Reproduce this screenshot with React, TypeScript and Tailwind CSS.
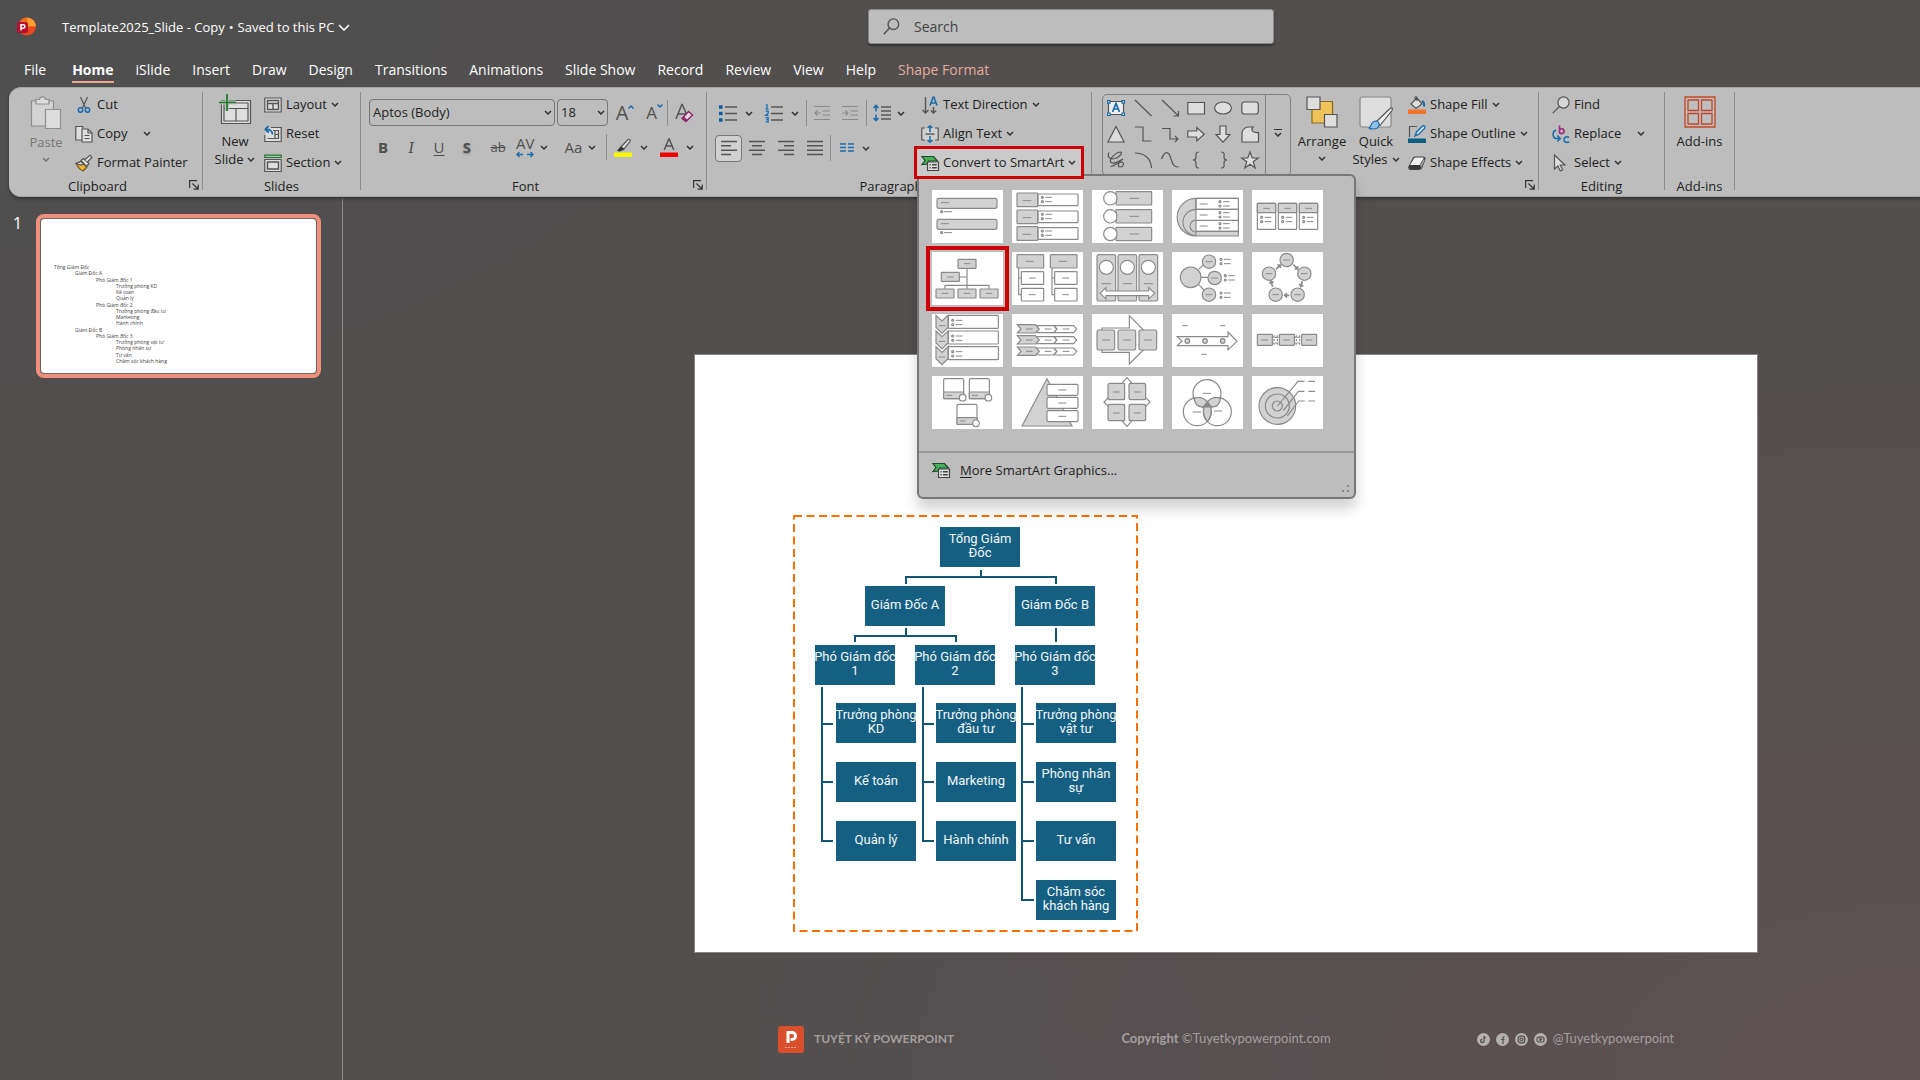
import React from "react";

type Kids = { children?: React.ReactNode };

/* ---------- small building blocks ---------- */

function Chevron({ className = "text-[#333]" }: { className?: string }) {
  return (
    <svg className={`h-[5px] w-[8px] shrink-0 ${className}`} viewBox="0 0 8 5" fill="none" stroke="currentColor" strokeWidth="1.5">
      <path d="M1 1l3 3 3-3" />
    </svg>
  );
}

function Launcher({ name }: { name: string }) {
  return (
    <button type="button" aria-label={name} className="absolute right-[3px] bottom-0">
      <svg className="h-[10px] w-[10px]" viewBox="0 0 10 10" fill="none" stroke="#333" strokeWidth="1.2">
        <path d="M.6 8V.6H8M3.5 3.5l5 5M9.2 4.5v4.7H4.5" />
      </svg>
    </button>
  );
}

function Group({ label, width, launcher, children }: Kids & { label: string; width: string; launcher?: boolean }) {
  return (
    <section aria-label={label} className={`relative flex h-[98px] shrink-0 flex-col border-r border-[#8c8c8c] ${width}`}>
      <div className="flex h-[86px] shrink-0 items-start">{children}</div>
      <div className={launcher ? "pr-4 text-center leading-4" : "text-center leading-4"}>{label}</div>
      {launcher && <Launcher name={`${label} settings`} />}
    </section>
  );
}

function Item({ icon, text, chevron }: { icon: React.ReactNode; text: string; chevron?: "near" | "far" }) {
  return (
    <button type="button" className="flex h-[29px] items-center gap-1 whitespace-nowrap">
      <span className="flex w-[18px] justify-center">{icon}</span>
      <span>{text}</span>
      {chevron && <Chevron className={chevron === "far" ? "ml-3 text-[#333]" : "text-[#333]"} />}
    </button>
  );
}

const Items = ({ children, className = "" }: Kids & { className?: string }) => (
  <div className={`-mt-[2px] flex flex-col ${className}`}>{children}</div>
);

function Ico({ children, w = "size-[18px]", box = "0 0 18 18" }: Kids & { w?: string; box?: string }) {
  return (
    <svg className={`shrink-0 overflow-visible ${w}`} viewBox={box} fill="none" stroke="#555" strokeWidth="1.2">
      {children}
    </svg>
  );
}

const Bar = () => <span className="h-[26px] w-px bg-[#8c8c8c]" />;

const BLUE = "#1a6cad";
const PALE = "#dedede";

/* ---------- ribbon icons ---------- */

const CutIcon = () => (
  <Ico>
    <path d="M5.5 1l5 11M12.5 1l-5 11" />
    <circle cx="5.5" cy="14" r="2.2" stroke={BLUE} strokeWidth="1.5" />
    <circle cx="12.5" cy="14" r="2.2" stroke={BLUE} strokeWidth="1.5" />
  </Ico>
);
const CopyIcon = () => (
  <Ico>
    <path d="M6.500 15H.8V1.500h7v2" fill={PALE} />
    <path d="M7 4h6l4 4v9H7z" fill={PALE} />
    <path d="M13 4v4h4M9.500 10.500h5M9.500 13.500h5" />
  </Ico>
);
const PainterIcon = () => (
  <Ico>
    <path d="M1 9.500l5-2 6 5.500-4 4c-3-1-5-4-7-7.500z" fill="#e8b339" stroke="#7a5a10" />
    <path d="M1 9.500l5-2 3 2.500-3.500 1z" fill={PALE} />
    <path d="M6 6.500l2.500-2 5.500 5-2.500 3z" fill={PALE} />
    <path d="M10 5.500L15 1.200l2 2L12.500 8" fill={PALE} />
  </Ico>
);
const PasteIcon = () => (
  <Ico w="h-[34px] w-[32px]" box="0 0 32 34">
    <g stroke="#8e8e8e">
      <path d="M1.500 5h22v25h-22z" fill="#d3d3d3" />
      <path d="M6 3.500h3.500c.5-3.500 5.500-3.500 6 0H19V8H6z" fill="#dcdcdc" />
      <path d="M15.500 13.500h15v19h-15z" fill="#dcdcdc" />
    </g>
  </Ico>
);
const NewSlideIcon = () => (
  <Ico w="h-[31px] w-[34px]" box="0 0 34 31">
    <path d="M3.500 6.500h29v23h-29z" fill={PALE} />
    <path d="M6 9h24v18H6zM6 14.500h24M18 14.500V27" />
    <path d="M9 0v17M1 8.500h17" stroke="#bdbdbd" strokeWidth="4" />
    <path d="M9 0v17M1 8.500h17" stroke="#1d7a2a" strokeWidth="1.700" />
  </Ico>
);
const LayoutIcon = () => (
  <Ico>
    <path d="M.8 2h16.400v14H.8z" fill={PALE} />
    <path d="M3.500 4.500h11v9h-11zM3.500 7.500h11M9 7.500v6" strokeWidth="1.400" />
  </Ico>
);
const ResetIcon = () => (
  <Ico>
    <path d="M7 2.500h10.200v14H.8V10" fill={PALE} />
    <path d="M9 5.500h5.500v8h-11M11 5.500v8M11 9.500h3.500" />
    <path d="M4.500 1L1.300 4.500 5 7.500M1.500 4.500c4-.8 7 1.500 7 5" stroke={BLUE} strokeWidth="1.700" />
  </Ico>
);
const SectionIcon = () => (
  <Ico>
    <path d="M.8 1.200h16.400v2.300H.8z" stroke="#1d7a2a" />
    <path d="M.8 5.500h16.400v12H.8z" fill={PALE} />
    <path d="M3.500 8h11v7h-11z" strokeWidth="1.400" />
  </Ico>
);
const Glyph = ({ children, className = "" }: Kids & { className?: string }) => (
  <span className={`leading-none text-[#505050] ${className}`}>{children}</span>
);
const ClearIcon = () => (
  <Ico w="h-[20px] w-[19px]" box="0 0 19 20">
    <path d="M1 16L6.800 1.500h.4L12 12M3 11h8" strokeWidth="1.500" />
    <path d="M13.500 8.500l4 3.500-6 6-3.500-3.500z" fill={PALE} stroke="#93266d" strokeWidth="1.500" />
    <path d="M8.500 14l3.500 3.500-1.500 1-3.500-3z" fill="#93266d" stroke="#93266d" />
  </Ico>
);
const HighlightIcon = () => (
  <Ico w="h-[19px] w-[18px]" box="0 0 18 19">
    <path d="M7 9l7-7.500c1.500-.8 3 .7 2 2.200L10 11z" fill={PALE} />
    <path d="M3 13l3.500-4.500 4 3L6 13.500z" fill="#333" stroke="none" />
    <path d="M0 14.500h18v4.500H0z" fill="#f7f700" stroke="none" />
  </Ico>
);
const FontColorIcon = () => (
  <Ico w="h-[19px] w-[18px]" box="0 0 18 19">
    <path d="M4.200 12L8.800 1h.4l4.600 11M6 8h6" strokeWidth="1.500" />
    <path d="M0 14.500h18v4.500H0z" fill="#f00000" stroke="none" />
  </Ico>
);
const SpacingIcon = () => (
  <Ico w="h-[7px] w-[18px]" box="0 0 18 7">
    <path d="M7 3.500H1M3.500 1L1 3.500 3.500 6M11 3.500h6M14.500 1L17 3.500 14.500 6" stroke={BLUE} strokeWidth="1.400" />
  </Ico>
);
const Bullets = () => (
  <Ico>
    <path d="M6 3h12M6 9.500h12M6 16h12" strokeWidth="1.400" />
    <path d="M0 1.200h3.600v3.600H0zM0 7.700h3.600v3.600H0zM0 14.200h3.600v3.600H0z" fill="#0f5ea8" stroke="none" />
  </Ico>
);
const Numbers = () => (
  <Ico>
    <path d="M6 3h12M6 9.500h12M6 16h12" strokeWidth="1.400" />
    <g stroke="#0f6fb5">
      <path d="M.8 1.200L2 .6v4M.5 4.800h3M.6 7.200h2.600v2L.6 11.300h2.800M.6 13.600h2.600v4.200H.6M1.200 15.600h2" />
    </g>
  </Ico>
);
const Indent = ({ out }: { out?: boolean }) => (
  <Ico w="size-[16px]" box="0 0 16 16">
    <g stroke="#8a8a8a">
      <path d="M0 1.500h16M8.500 6h7.500M8.500 10h7.500M0 14.500h16" />
      <path d={out ? "M7 8H1M3.500 5.500L1 8l2.500 2.500" : "M0 8h6M3.500 5.500L6 8l-2.500 2.500"} />
    </g>
  </Ico>
);
const LineSpacing = () => (
  <Ico>
    <path d="M8 3h10M8 7h10M8 11h10M8 15h10" strokeWidth="1.400" />
    <path d="M3 1.500v6M3 10.500v6M.5 4L3 1.500 5.500 4M.5 14L3 16.500 5.500 14" stroke={BLUE} strokeWidth="1.600" />
  </Ico>
);
const AlignLines = ({ d }: { d: string }) => (
  <Ico w="size-[16px]" box="0 0 16 16">
    <path d={d} strokeWidth="1.400" />
  </Ico>
);
const ColumnsIcon = () => (
  <Ico w="h-[12px] w-[14px]" box="0 0 14 12">
    <path d="M0 2h6M0 5.500h6M0 9h6M8 2h6M8 5.500h6M8 9h6" stroke={BLUE} strokeWidth="1.400" />
  </Ico>
);
const TextDirIcon = () => (
  <Ico>
    <path d="M4.500 1v15.500M1.500 14l3 3 3-3M12.500 11v6M9.800 14.500l2.700 2.500 2.700-2.500" strokeWidth="1.400" />
    <path d="M9 9.500L12.200 1h.6L16 9.500M10 7h5" stroke={BLUE} strokeWidth="1.600" />
  </Ico>
);
const AlignTextIcon = () => (
  <Ico>
    <path d="M.8 3h16.400v12H.8z" fill="#d0d0d0" stroke="none" />
    <path d="M4 3H.8v12H4M14 3h3.200v12H14" />
    <path d="M4.500 9h9" strokeWidth="1.400" />
    <path d="M9 .8V7M9 17.200V11M6.500 3L9 .8 11.500 3M6.500 15L9 17.200 11.500 15" stroke={BLUE} strokeWidth="1.500" />
  </Ico>
);
const SmartArtIcon = () => (
  <Ico>
    <path d="M1 2.500h11.500l4 4.500H7.500v3L1 10.500l3-4z" fill="#46b05a" stroke="#1b4d25" />
    <path d="M6.500 8h11v8.500h-11z" fill={PALE} stroke="#444" />
    <path d="M8.500 10.800h1.200M11 10.800h4.800M8.500 13.800h1.200M11 13.800h4.800" stroke="#444" strokeWidth="1.400" />
  </Ico>
);
const ArrangeIcon = () => (
  <Ico w="h-[32px] w-[32px]" box="0 0 32 32">
    <path d="M6 5.500h20.500V27H6z" fill="#f0c25a" stroke="#8a6a1c" />
    <path d="M1 1h13v12.500H1zM18.500 18.500h12.500v12.500H18.500z" fill={PALE} />
  </Ico>
);
const QuickIcon = () => (
  <Ico w="h-[34px] w-[34px]" box="0 0 34 34">
    <rect x="1" y="1" width="31" height="30" rx="2" fill={PALE} stroke="#888" />
    <path d="M17 26L31 12.500c2-1.500 3 0 2 2L21 29.500z" fill="#eee" />
    <path d="M10 32c3-1 1-7 7-7 5 1 4 8-3 8-2 0-3 0-4-1z" fill="#8fc3ea" stroke={BLUE} />
  </Ico>
);
const FillIcon = () => (
  <Ico>
    <path d="M3 8l6-6 5 6-6 4.500zM7 4V1.500c0-1 2-1 2 0V5" fill={PALE} />
    <path d="M14 5c2 1 2.500 3 2 5.500" stroke={BLUE} strokeWidth="2" />
    <path d="M0 13.500h18V18H0z" fill="#f2742b" stroke="none" />
  </Ico>
);
const OutlineIcon = () => (
  <Ico>
    <path d="M9 1.500H1.500V12" />
    <path d="M7 11l1.500-4 6-6c1.500-.8 3 .8 2.300 2.200l-6 6z" fill="#cfe3f3" stroke={BLUE} strokeWidth="1.400" />
    <path d="M0 13.500h18V18H0z" fill="#0f5f85" stroke="none" />
  </Ico>
);
const EffectsIcon = () => (
  <Ico>
    <path d="M1 12.500L5.500 4c.4-.7 1-1 2-1H15c1.500 0 2.300 1 1.800 2.500L14 13c-.4 1.200-1.500 2.500-3 2.500H3c-1.700 0-2.700-1.500-2-3z" fill="#3a3a3a" stroke="#444" />
    <path d="M2 11l4-6.500C6.400 3.700 7 3.500 8 3.500h6.500c1 0 1.300.5.800 1.300L11.500 11z" fill="#f0f0f0" stroke="none" />
    <path d="M12 11l4-6.500.5 2L13.500 14z" fill="#9a9a9a" stroke="none" />
  </Ico>
);
const Lens = () => (
  <Ico>
    <circle cx="11.500" cy="6.500" r="5.600" fill="#d6d6d6" />
    <path d="M7.500 10.500L.8 17.200" />
  </Ico>
);
const ReplaceIcon = () => (
  <Ico>
    <path d="M7.500.500v8.200M7.500 5.200c.6-2 4.500-2 4.500 1s-3.900 3-4.500 1" stroke="#a3267f" strokeWidth="1.600" />
    <path d="M17 12.600c-1.500-1.500-5-.9-5 2s3.500 3.500 5 2" stroke={BLUE} strokeWidth="1.600" />
    <path d="M4 5C0 6.500 0 13 4.500 13.500h3.500M5.300 10.500l3 3-3 3" stroke={BLUE} strokeWidth="1.500" />
  </Ico>
);
const SelectIcon = () => (
  <Ico>
    <path d="M2.500 1v14l3.300-3 2.500 5 2.300-1.200L8.200 11h4.600z" fill={PALE} />
  </Ico>
);
const AddinsIcon = () => (
  <Ico w="size-[32px]" box="0 0 32 32">
    <g stroke="#c4482b" strokeWidth="1.300">
      <path d="M1 1h30v30H1zM4 4h10.500v10.500H4zM17.500 4H28v10.500H17.500zM4 17.500h10.500V28H4zM17.500 17.500H28V28H17.500z" />
    </g>
  </Ico>
);

const SHAPES: React.ReactNode[] = [
  <g>
    <path d="M1.500 2.500h15v13h-15z" fill="#eee" />
    <path d="M5.500 13L9 4.500 12.500 13M6.800 10h4.400" stroke={BLUE} strokeWidth="1.700" />
    <g fill="#eee" stroke={BLUE}>
      <path d="M.6 1.600h2.500v2.500H.6zM15 1.600h2.500v2.500H15zM.6 14h2.500v2.500H.6zM15 14h2.500v2.500H15z" />
    </g>
  </g>,
  <path d="M1 1l16.500 16" />,
  <path d="M1 1l16.500 16M17.500 12v5h-5" />,
  <path d="M.8 3.500h16.700v11.500H.8z" fill={PALE} />,
  <ellipse cx="9" cy="9" rx="8.400" ry="6" fill={PALE} />,
  <rect x=".8" y="3" width="16.500" height="12" rx="2.500" fill={PALE} />,
  <path d="M9 1.500L17 17H1z" fill={PALE} />,
  <path d="M1 2h8v14h8.500" />,
  <path d="M1 3.500h8V14h8M14 11l3 3-3 3" />,
  <path d="M.8 6h9V2.500L17.200 9.200 9.800 16v-4h-9z" fill={PALE} />,
  <path d="M6 1h6v8.500h4L9 17.200 2 9.500h4z" fill={PALE} />,
  <path d="M1 7.500C2 4 4 2 8 2h4c-2.500 3-.5 6 5.500 5.500V17H1z" fill={PALE} />,
  <path d="M2 1.500C0 5 2 9 8 7.500c5-1.500 8-6 5.500-6.500C10 1 1 8 4 11.500c3 2.500 9-2 12-3.500M16 8c-4 2-6.500 8-3 8 4 0 5-5 1-5-4 .5-6 4-10.500 4.500" />,
  <path d="M1 2c9 0 16 5 16.500 15" />,
  <path d="M.5 8C4-1 8 0 10 8c2 7 4 8 7.500 8" />,
  <path d="M12 1C8 1 9 4 9 6c0 2-1 3-3 3 2 0 3 1 3 3 0 2-1 5 3 5" />,
  <path d="M7 1c4 0 3 3 3 5 0 2 1 3 3 3-2 0-3 1-3 3 0 2 1 5-3 5" />,
  <path d="M9 1l2.200 6h6l-5 3.700L14.200 17 9 13.200 3.800 17l2-6.300-5-3.700h6z" fill={PALE} />,
];

/* ---------- SmartArt gallery drawings, on a 213 x 159 grid ---------- */

const G = "#d2d2d2";
const B = ({ x, y, w, h, f = G, r = 2 }: { x: number; y: number; w: number; h: number; f?: string; r?: number }) => (
  <rect x={x} y={y} width={w} height={h} rx={r} fill={f} />
);
const C = ({ x, y, r, f = G }: { x: number; y: number; r: number; f?: string }) => <circle cx={x} cy={y} r={r} fill={f} />;
const T = ({ x, y, w = 20 }: { x: number; y: number; w?: number }) => <path d={`M${x - w / 2} ${y}h${w}`} strokeWidth="3" />;
const L = ({ x, y }: { x: number; y: number }) => (
  <g>
    <circle cx={x} cy={y} r="3" />
    <circle cx={x} cy={y + 13} r="3" />
    <path d={`M${x + 9} ${y}h20M${x + 9} ${y + 13}h20`} strokeWidth="3" />
  </g>
);

const GALLERY: [string, React.ReactNode][] = [
  ["Vertical Bullet List", <>
    <B x={15} y={25} w={180} h={30} r={6} /><T x={39} y={38} w={24} /><C x={29} y={65} r={3} /><T x={48} y={65} w={24} />
    <B x={15} y={88} w={180} h={30} r={6} /><T x={39} y={101} w={24} /><C x={29} y={128} r={3} /><T x={48} y={128} w={24} />
  </>],
  ["Vertical Box List", <>{[9, 60, 110].map((y) => <g key={y}><B x={78} y={y + 3} w={120} h={35} f="#fff" /><B x={15} y={y} w={62} h={41} /><T x={45} y={y + 23} w={26} /><L x={91} y={y + 13} /></g>)}</>],
  ["Vertical Circle List", <>{[4, 58, 111].map((y) => <g key={y}><B x={72} y={y + 1} w={107} h={40} /><C x={55} y={y + 21} r={20} f="#fff" /><T x={127} y={y + 21} w={28} /></g>)}</>],
  ["Stacked Target List", <>
    <path d="M72 25h127v113H72a56 56 0 0 1 0-113z" fill={G} /><path d="M72 58h127v66H72" fill="#fff" /><path d="M72 25h127v33H72z" fill="#fff" />
    <path d="M72 58a38 38 0 0 0 0 78M72 90a18 18 0 0 0 0 36M72 25v113M72 58h127M72 91h127M72 124h127" />
    {[35, 68, 101].map((y) => <g key={y}><T x={95} y={y + 7} w={24} /><L x={144} y={y} /></g>)}
  </>],
  ["Grouped List", <>{[16, 79, 142].map((x) => <g key={x}><B x={x} y={40} w={55} h={78} f="#fff" /><B x={x} y={40} w={55} h={28} /><T x={x + 28} y={55} /><L x={x + 13} y={82} /></g>)}</>],
  ["Organization Chart", <>
    <path d="M105 50v60M82 75h23M39 110v-10h132v10" />
    <B x={78} y={22} w={54} h={27} /><B x={28} y={61} w={54} h={27} /><B x={12} y={111} w={54} h={27} /><B x={78} y={111} w={54} h={27} /><B x={144} y={111} w={54} h={27} />
    <T x={105} y={35} /><T x={55} y={75} /><T x={39} y={124} /><T x={105} y={124} /><T x={171} y={124} />
  </>],
  ["Hierarchy List", <>{[15, 115].map((x) => <g key={x}><path d={`M${x + 5} 48v80h8M${x + 5} 78h8`} /><B x={x} y={8} w={80} h={40} /><B x={x + 13} y={59} w={67} h={38} f="#fff" /><B x={x + 13} y={109} w={67} h={38} f="#fff" /><T x={x + 38} y={28} w={24} /><T x={x + 46} y={78} /><T x={x + 46} y={128} /></g>)}</>],
  ["Picture Accent Process", <>{[15, 78, 141].map((x) => <g key={x}><B x={x} y={8} w={56} h={139} r={5} /><C x={x + 28} y={46} r={21} f="#fff" /><T x={x + 28} y={95} w={28} /></g>)}<path d="M24 124l18-17v10h128v-10l18 17-18 17v-10H42v10z" fill="#fff" /></>],
  ["Radial List", <>
    <path d="M80 52l16-15M88 76h20M80 98l16 16" /><C x={56} y={76} r={31} /><C x={111} y={29} r={20} /><C x={128} y={78} r={20} /><C x={111} y={128} r={20} />
    <T x={111} y={29} /><T x={128} y={78} /><T x={111} y={128} /><L x={147} y={22} /><L x={160} y={71} /><L x={147} y={123} />
  </>],
  ["Basic Cycle", <>
    {[[104, 24], [157, 65], [137, 128], [71, 128], [51, 65]].map(([x, y]) => <g key={x}><C x={x} y={y} r={20} /><T x={x} y={y} /></g>)}
    <path d="M72 52l13-13M76 39h9v9M124 38l13 13M137 42v9h-9M151 88l-5 16M143 96l3 8 8-4M98 130h14M105 123l-7 7 7 7M62 104l-5-16M53 95l4-8 8 5" strokeWidth="5" />
  </>],
  ["Vertical Chevron List", <>{[4, 51, 98].map((y) => <g key={y}><B x={49} y={y} w={150} h={39} f="#fff" /><path d={`M12 ${y}l18 17 18-17v36l-18 18-18-18z`} fill={G} /><T x={30} y={y + 31} /><L x={62} y={y + 15} /></g>)}</>],
  ["Chevron List", <>{[32, 65, 99].map((y) => <g key={y}><path d={`M125 ${y + 3}h60l9 10-9 11h-60l9-11zM75 ${y + 3}h51l9 10-9 11H75z`} fill="#fff" /><path d={`M16 ${y}h54l12 13-12 12H16l11-12z`} fill={G} /><T x={52} y={y + 13} /><T x={108} y={y + 13} /><T x={162} y={y + 13} /></g>)}</>],
  ["Continuous Block Process", <><path d="M30 42h82V5l72 73-72 72v-35H30z" fill="#fff" />{[15, 78, 141].map((x) => <g key={x}><B x={x} y={48} w={53} h={60} r={5} /><T x={x + 27} y={78} w={24} /></g>)}</>],
  ["Basic Timeline", <><path d="M16 68h152V54l27 28-27 26V95H16l14-14z" fill="#fff" /><C x={46} y={81} r={7} /><C x={99} y={81} r={7} /><C x={152} y={81} r={7} /><T x={39} y={35} w={16} /><T x={152} y={35} w={16} /><T x={96} y={121} w={16} /></>],
  ["Basic Process", <><path d="M58 70h24M58 87h24M125 70h24M125 87h24M66 64v28M76 64v28M133 64v28M143 64v28" strokeDasharray="7 4" />{[16, 82, 149].map((x) => <g key={x}><B x={x} y={61} w={45} h={33} /><T x={x + 22} y={78} /></g>)}</>],
  ["Bending Picture Caption", <>{[[35, 8], [112, 8], [75, 85]].map(([x, y]) => <g key={`${x}-${y}`}><B x={x} y={y} w={60} h={60} f="#fff" r={4} /><B x={x} y={y + 40} w={60} h={20} /><T x={x + 17} y={y + 50} w={18} /><C x={x + 57} y={y + 57} r={10} f="#fff" /></g>)}</>],
  ["Pyramid List", <><path d="M105 8L30 150h150z" fill={G} />{[25, 64, 104].map((y) => <g key={y}><B x={105} y={y} w={93} h={33} f="#fff" r={4} /><T x={151} y={y + 17} w={24} /></g>)}</>],
  ["Basic Matrix", <><path d="M105 5l16 18h-8v47h45v-8l16 16-16 16v-8h-45v47h8l-16 18-16-18h8V86H52v8L36 78l16-16v8h45V23h-8z" fill="#fff" />{[[48, 22], [111, 22], [48, 85], [111, 85]].map(([x, y]) => <g key={`${x}-${y}`}><B x={x} y={y} w={50} h={49} r={6} /><T x={x + 25} y={y + 26} /></g>)}</>],
  ["Basic Venn", <>
    <C x={105} y={53} r={42} f="none" /><C x={76} y={107} r={42} f="none" /><C x={136} y={107} r={42} f="none" />
    <path d="M66 67c14-5 30-1 40 11-7 8-11 16-12 14-16 3-25-9-28-25zM146 67c-14-5-30-1-40 11 5 6 8 10 12 14 16 3 25-9 28-25zM106 136c-14-17-16-42 0-58 16 16 14 41 0 58z" fill={G} />
    <path d="M106 78l11 15H95z" fill="#888" /><T x={105} y={52} w={24} /><T x={75} y={108} w={26} /><T x={138} y={105} w={24} />
  </>],
  ["Basic Target", <><C x={76} y={90} r={55} /><C x={76} y={90} r={36} /><C x={76} y={90} r={15} /><path d="M76 90l62-74h20M94 104l45-58h18M106 120l34-45h18M169 16h20M169 46h20M169 75h20" /></>],
];

/* ---------- page sections ---------- */

const TABS = ["File", "Home", "iSlide", "Insert", "Draw", "Design", "Transitions", "Animations", "Slide Show", "Record", "Review", "View", "Help", "Shape Format"];

function TitleBar() {
  return (
    <header className="flex h-[54px] items-start pl-[17px]">
      <svg className="mt-[17px] size-[19px]" viewBox="0 0 19 19" aria-label="PowerPoint" role="img">
        <circle cx="10" cy="9.500" r="9" fill="#e8481c" />
        <path d="M10 .5a9 9 0 0 1 9 9h-9z" fill="#ff9d2e" />
        <path d="M3 4.500A9 9 0 0 1 10 .5v9H3z" fill="#f36f21" />
        <rect y="5" width="11" height="11" rx="2" fill="#b80f2e" />
        <path d="M4 13.500V7.800h2.200a1.600 1.600 0 0 1 0 3.400H4" fill="none" stroke="#fff" strokeWidth="1.500" />
      </svg>
      <button type="button" className="mt-4 ml-[26px] flex w-[290px] items-center gap-1 text-[13px] leading-[22px] whitespace-nowrap text-white">
        <span>Template2025_Slide - Copy</span>
        <span>•</span>
        <span>Saved to this PC</span>
        <svg className="h-[7px] w-[12px]" viewBox="0 0 12 7" fill="none" stroke="#fff" strokeWidth="1.500"><path d="M1 1l5 5 5-5" /></svg>
      </button>
      <label className="mt-[9px] ml-[516px] flex h-[35px] w-[406px] items-center rounded-[3px] border border-[#8a8a8a] bg-[#bdbdbd] pl-[14px] shadow-[0_2px_2px_#333]">
        <Ico w="size-[17px]"><circle cx="11" cy="6.500" r="5.600" strokeWidth="1.500" /><path d="M7 10.500L.8 17.200" strokeWidth="1.600" /></Ico>
        <input type="search" aria-label="Search" placeholder="Search" className="ml-[14px] flex-1 bg-transparent text-sm text-[#444] outline-none placeholder:text-[#444]" />
      </label>
    </header>
  );
}

function Tabs() {
  return (
    <nav aria-label="Ribbon tabs" className="flex h-[33px] gap-[22px] pl-6 text-sm">
      {TABS.map((t) => (
        <button
          type="button"
          key={t}
          className={
            t === "Home" ? "ml-1 flex h-[29px] items-start border-b-2 border-[#f2a390] leading-8 font-bold whitespace-nowrap text-white"
              : t === "Shape Format" ? "flex h-[29px] items-start leading-8 whitespace-nowrap text-[#e5ab9e]"
              : "flex h-[29px] items-start leading-8 whitespace-nowrap text-white"
          }
        >
          {t}
        </button>
      ))}
    </nav>
  );
}

function SmartArtMenu() {
  return (
    <div role="menu" className="absolute top-[26px] left-0 z-10 w-[439px] rounded-md rounded-tl-none border-2 border-[#777] bg-[#bdbdbd] shadow-[0_10px_14px_rgba(0,0,0,0.18)]">
      <div className="grid grid-cols-[repeat(5,71px)] gap-[9px] pt-[14px] pb-[22px] pl-[13px]">
        {GALLERY.map(([name, art]) => (
          <button
            type="button"
            role="menuitem"
            key={name}
            aria-label={name}
            className={name === "Organization Chart" ? "h-[53px] bg-white outline-4 outline-offset-2 outline-[#cc0000]" : "h-[53px] bg-white"}
          >
            <svg className="h-[53px] w-[71px]" viewBox="0 0 213 159" fill="none" stroke="#8a8a8a" strokeWidth="3.500">{art}</svg>
          </button>
        ))}
      </div>
      <button type="button" role="menuitem" className="flex w-full items-center gap-[10px] border-t-2 border-[#999] pt-[7px] pb-[17px] pl-[13px] leading-5">
        <SmartArtIcon />
        <span><span className="underline underline-offset-2">M</span>ore SmartArt Graphics...</span>
      </button>
      <svg className="absolute right-1 bottom-1 size-2" viewBox="0 0 8 8" fill="#8a8a8a"><path d="M5 0h2v2H5zM5 5h2v2H5zM0 5h2v2H0z" /></svg>
    </div>
  );
}

function Ribbon() {
  const cell = "flex w-[28px] shrink-0 items-center justify-center";
  return (
    <div className="relative z-10 ml-[9px] flex h-[110px] rounded-l-xl border-y border-[#a5a5a5] bg-[#bdbdbd] pt-1 text-[13px] text-[#222] shadow-[0_2px_3px_#333]">
      <Group label="Clipboard" width="w-[194px]" launcher>
        <button type="button" className="mt-1 ml-[20px] flex w-[34px] flex-col items-center text-[#777]">
          <PasteIcon />
          <span className="mt-[3px] leading-[18px]">Paste</span>
          <Chevron className="mt-[6px] text-[#777]" />
        </button>
        <Items className="ml-[12px]">
          <Item icon={<CutIcon />} text="Cut" />
          <Item icon={<CopyIcon />} text="Copy" chevron="far" />
          <Item icon={<PainterIcon />} text="Format Painter" />
        </Items>
      </Group>

      <Group label="Slides" width="w-[158px]">
        <button type="button" className="mt-[2px] ml-[9px] flex w-[46px] flex-col items-center leading-[18px]">
          <NewSlideIcon />
          <span className="mt-[7px]">New</span>
          <span className="flex items-center gap-1">Slide <Chevron /></span>
        </button>
        <Items className="ml-[6px]">
          <Item icon={<LayoutIcon />} text="Layout" chevron="near" />
          <Item icon={<ResetIcon />} text="Reset" />
          <Item icon={<SectionIcon />} text="Section" chevron="near" />
        </Items>
      </Group>

      <Group label="Font" width="w-[346px]" launcher>
        <div className="flex w-full flex-col pt-[7px] pl-2">
          <div className="flex h-[27px] items-center">
            <span className="relative flex h-[27px] w-[186px] items-center">
              <select aria-label="Font" className="h-full w-full appearance-none rounded-[4px] border border-[#777] pl-[3px] outline-none"><option>Aptos (Body)</option></select>
              <span className="pointer-events-none absolute right-[3px]"><Chevron /></span>
            </span>
            <span className="relative ml-[2px] flex h-[27px] w-[51px] items-center">
              <select aria-label="Font size" className="h-full w-full appearance-none rounded-[4px] border border-[#777] pl-[3px] outline-none"><option>18</option></select>
              <span className="pointer-events-none absolute right-[3px]"><Chevron /></span>
            </span>
            <button type="button" aria-label="Increase font size" className="flex w-[34px] items-start justify-center"><Glyph className="text-[20px]">A</Glyph><Ico w="h-[4px] w-[6px] mt-[2px]" box="0 0 6 4"><path d="M.5 3.500L3 1l2.500 2.500" stroke={BLUE} strokeWidth="1.500" /></Ico></button>
            <button type="button" aria-label="Decrease font size" className="flex w-[25px] items-start justify-center"><Glyph className="text-[17px]">A</Glyph><Ico w="h-[4px] w-[6px]" box="0 0 6 4"><path d="M.5.5L3 3 5.500.5" stroke={BLUE} strokeWidth="1.500" /></Ico></button>
            <Bar />
            <button type="button" aria-label="Clear formatting" className="ml-[7px]"><ClearIcon /></button>
          </div>
          <div className="mt-[7px] flex h-[28px] items-center">
            <button type="button" aria-label="Bold" className={cell}><Glyph className="text-[15px] font-bold">B</Glyph></button>
            <button type="button" aria-label="Italic" className={cell}><span className="font-serif text-[17px] leading-none text-[#505050] italic">I</span></button>
            <button type="button" aria-label="Underline" className={cell}><Glyph className="text-[15px] underline underline-offset-2">U</Glyph></button>
            <button type="button" aria-label="Shadow" className={cell}><Glyph className="text-[15px] font-bold text-shadow-md">S</Glyph></button>
            <button type="button" aria-label="Strikethrough" className="ml-[3px] flex w-[28px] shrink-0 items-center justify-center"><Glyph className="text-[13px] line-through">ab</Glyph></button>
            <button type="button" aria-label="Character spacing" className="ml-[4px] flex items-center gap-[6px]"><span className="flex flex-col items-center"><Glyph className="text-[15px]">AV</Glyph><SpacingIcon /></span><Chevron /></button>
            <button type="button" aria-label="Change case" className="ml-[16px] flex items-center gap-[6px]"><Glyph className="text-[15px]">Aa</Glyph><Chevron /></button>
            <span className="ml-[10px] flex"><Bar /></span>
            <button type="button" aria-label="Highlight colour" className="ml-[7px] flex items-center gap-2"><HighlightIcon /><Chevron /></button>
            <button type="button" aria-label="Font colour" className="ml-[12px] flex items-center gap-2"><FontColorIcon /><Chevron /></button>
          </div>
        </div>
      </Group>

      <Group label="Paragraph" width="w-[385px]" launcher>
        <div className="flex w-[208px] flex-col pt-[8px] pl-[8px]">
          <div className="flex h-[26px] items-center pl-1">
            <button type="button" aria-label="Bullets" className="flex items-center gap-2"><Bullets /><Chevron /></button>
            <button type="button" aria-label="Numbering" className="ml-[12px] flex items-center gap-2"><Numbers /><Chevron /></button>
            <span className="ml-[7px] flex"><Bar /></span>
            <button type="button" aria-label="Decrease indent" className="ml-[7px]"><Indent out /></button>
            <button type="button" aria-label="Increase indent" className="ml-[12px]"><Indent /></button>
            <span className="ml-[8px] flex"><Bar /></span>
            <button type="button" aria-label="Line spacing" className="ml-[6px] flex items-center gap-[6px]"><LineSpacing /><Chevron /></button>
          </div>
          <div className="mt-[8px] flex h-[28px] items-center">
            <button type="button" aria-label="Align left" className="flex h-[27px] w-[27px] items-center justify-center rounded-[4px] border border-[#777] bg-[#d0d0d0]"><AlignLines d="M0 1.500h16M0 5.800h10M0 10.200h16M0 14.500h10" /></button>
            <button type="button" aria-label="Centre" className="ml-[7px]"><AlignLines d="M0 1.500h16M3 5.800h10M0 10.200h16M3 14.500h10" /></button>
            <button type="button" aria-label="Align right" className="ml-[13px]"><AlignLines d="M0 1.500h16M6 5.800h10M0 10.200h16M6 14.500h10" /></button>
            <button type="button" aria-label="Justify" className="ml-[13px]"><AlignLines d="M0 1.500h16M0 5.800h16M0 10.200h16M0 14.500h16" /></button>
            <span className="ml-[7px] flex"><Bar /></span>
            <button type="button" aria-label="Columns" className="ml-[9px] flex items-center gap-2"><ColumnsIcon /><Chevron /></button>
          </div>
        </div>
        <Items className="ml-[6px]">
          <Item icon={<TextDirIcon />} text="Text Direction" chevron="near" />
          <Item icon={<AlignTextIcon />} text="Align Text" chevron="near" />
          <div className="relative -ml-[4px]">
            <button type="button" aria-haspopup="menu" aria-expanded="true" className="relative z-20 -mt-[2px] -ml-[3px] flex h-[33px] w-[170px] items-center gap-1 border-3 border-[#cc0000] bg-[#cacaca] pl-1 whitespace-nowrap">
              <SmartArtIcon />
              <span>Convert to SmartArt</span>
              <Chevron />
            </button>
            <SmartArtMenu />
          </div>
        </Items>
      </Group>

      <Group label="" width="w-[447px]" launcher>
        <div className="mt-[2px] ml-[10px] flex h-[82px] w-[189px] shrink-0 rounded-[5px] border border-[#808080]">
          <div className="grid w-[162px] grid-cols-6 grid-rows-3 place-items-center pr-[2px] pb-[2px]">
            {SHAPES.map((s, i) => (
              <button type="button" key={i} aria-label={`Shape ${i + 1}`}><Ico>{s}</Ico></button>
            ))}
          </div>
          <button type="button" aria-label="More shapes" className="flex flex-1 flex-col items-center justify-center gap-[2px] rounded-r-[4px] border-l border-[#808080] pb-1">
            <span className="h-px w-[8px] bg-[#333]" />
            <Chevron />
          </button>
        </div>
        <button type="button" className="mt-1 ml-[6px] flex w-[50px] flex-col items-center leading-[18px]">
          <ArrangeIcon />
          <span className="mt-[4px]">Arrange</span>
          <Chevron className="mt-[6px] text-[#333]" />
        </button>
        <button type="button" className="mt-1 ml-[5px] flex w-[48px] flex-col items-center leading-[18px]">
          <QuickIcon />
          <span className="mt-[2px]">Quick</span>
          <span className="flex items-center gap-1">Styles <Chevron /></span>
        </button>
        <Items className="ml-[8px]">
          <Item icon={<FillIcon />} text="Shape Fill" chevron="near" />
          <Item icon={<OutlineIcon />} text="Shape Outline" chevron="near" />
          <Item icon={<EffectsIcon />} text="Shape Effects" chevron="near" />
        </Items>
      </Group>

      <Group label="Editing" width="w-[126px]">
        <Items className="ml-[13px]">
          <Item icon={<Lens />} text="Find" />
          <Item icon={<ReplaceIcon />} text="Replace" chevron="far" />
          <Item icon={<SelectIcon />} text="Select" chevron="near" />
        </Items>
      </Group>

      <Group label="Add-ins" width="w-[70px]">
        <button type="button" className="mt-1 flex w-full flex-col items-center leading-[18px]">
          <AddinsIcon />
          <span className="mt-[4px]">Add-ins</span>
        </button>
      </Group>
    </div>
  );
}

const OUTLINE: [number, string][] = [
  [0, "Tổng Giám Đốc"], [1, "Giám Đốc A"], [2, "Phó Giám đốc 1"], [3, "Trưởng phòng KD"], [3, "Kế toán"], [3, "Quản lý"],
  [2, "Phó Giám đốc 2"], [3, "Trưởng phòng đầu tư"], [3, "Marketing"], [3, "Hành chính"], [1, "Giám Đốc B"], [2, "Phó Giám đốc 3"],
  [3, "Trưởng phòng vật tư"], [3, "Phòng nhân sự"], [3, "Tư vấn"], [3, "Chăm sóc khách hàng"],
];
const INDENTS = ["pl-0", "pl-[21px]", "pl-[42px]", "pl-[62px]"];

function SlidePane() {
  return (
    <aside className="flex w-[343px] shrink-0 items-start border-r border-[#8d8989] pt-[17px] pl-[13px]">
      <span className="w-[23px] pt-[1px] text-base leading-4 text-white">1</span>
      <button type="button" aria-label="Slide 1" className="h-[164px] w-[285px] rounded-[8px] border-4 border-[#f28f7c] bg-[#555]">
        <span className="flex h-full flex-col justify-between rounded-[4px] border border-[#666] bg-white pt-[45px] pb-[9px] pl-[13px] text-left text-[5px] leading-[6px] text-[#444]">
          {OUTLINE.map(([lvl, t]) => <span key={t} className={INDENTS[lvl]}>{t}</span>)}
        </span>
      </button>
    </aside>
  );
}

/* Nodes of the chart: left, top and label, measured inside the dashed frame. */
const NODES: [number, number, string][] = [
  [147, 12, "Tổng Giám\nĐốc"],
  [72, 71, "Giám Đốc A"], [222, 71, "Giám Đốc B"],
  [22, 130, "Phó Giám đốc\n1"], [122, 130, "Phó Giám đốc\n2"], [222, 130, "Phó Giám đốc\n3"],
  [43, 188, "Trưởng phòng\nKD"], [143, 188, "Trưởng phòng\nđầu tư"], [243, 188, "Trưởng phòng\nvật tư"],
  [43, 247, "Kế toán"], [143, 247, "Marketing"], [243, 247, "Phòng nhân\nsự"],
  [43, 306, "Quản lý"], [143, 306, "Hành chính"], [243, 306, "Tư vấn"],
  [243, 365, "Chăm sóc\nkhách hàng"],
];

function OrgChart() {
  return (
    <div className="absolute top-[160px] left-[98px] h-[417px] w-[345px]">
      <svg className="absolute inset-0 h-[417px] w-[345px]" viewBox="0 0 345 417" fill="none">
        <rect x="1" y="1" width="343" height="415" stroke="#ff6f00" strokeWidth="2" strokeDasharray="8 4.500" />
        <path
          stroke="#125574"
          strokeWidth="2"
          d="M188 55v7M113 69v-7h150v7M113 113v8M62 127v-6h101v6M263 113v14M29 172v154h11M29 209h11M29 267h11M130 172v154h11M130 209h11M130 267h11M229 172v213h12M229 209h12M229 267h12M229 326h12"
        />
      </svg>
      {NODES.map(([x, y, t]) => (
        <div key={t} className="absolute flex h-10 w-20 items-center justify-center bg-[#156082] text-center font-[Roboto] text-[13px] leading-[14px] whitespace-pre text-[#f2f7f9]" style={{ left: x, top: y }}>
          <span className="pb-[2px]">{t}</span>
        </div>
      ))}
    </div>
  );
}

function Social({ children }: Kids) {
  return <svg className="size-[13px]" viewBox="0 0 13 13"><circle cx="6.500" cy="6.500" r="6.500" fill="#b5b0b0" /><g fill="none" stroke="#534e4e" strokeWidth="1.200">{children}</g></svg>;
}

function Footer() {
  return (
    <footer className="mr-[246px] ml-[435px] grid grid-cols-[1fr_auto_1fr] items-center font-[Lato] text-[13px] text-[#a39e9e]">
      <div className="flex items-center gap-[10px]">
        <svg className="h-[27px] w-[26px]" viewBox="0 0 26 27" role="img" aria-label="Tuyệt Kỹ PowerPoint">
          <rect width="26" height="27" rx="3" fill="#d94f2b" />
          <path d="M10 17V6.500h4a3.500 3.500 0 0 1 0 7h-1.500" fill="none" stroke="#fff" strokeWidth="3" />
          <path d="M7 21.500h12" stroke="#f0a994" strokeDasharray="2 1" />
        </svg>
        <span className="text-[12px] font-bold">TUYỆT KỸ POWERPOINT</span>
      </div>
      <span><b>Copyright</b> ©Tuyetkypowerpoint.com</span>
      <div className="flex items-center justify-end gap-[6px]">
        <Social><path d="M7 3v5a1.700 1.700 0 1 1-1.700-1.700M7 3c0 1.500 1 2 2 2" /></Social>
        <Social><path d="M7 11V5c0-1 .5-1.500 1.700-1.500M5 6.500h3.500" /></Social>
        <Social><rect x="3.200" y="3.200" width="6.600" height="6.600" rx="2" /><circle cx="6.500" cy="6.500" r="1.500" /></Social>
        <Social><rect x="3" y="4.200" width="7" height="4.800" rx="1.500" /><path d="M6 5.600v2l1.500-1z" /></Social>
        <a href="#tuyetkypowerpoint">@Tuyetkypowerpoint</a>
      </div>
    </footer>
  );
}

export default function App() {
  return (
    <div className="flex min-h-screen flex-col overflow-hidden bg-[#534f4e] bg-[radial-gradient(ellipse_at_0%_0%,#4f4f4f_0%,transparent_45%),radial-gradient(ellipse_at_100%_100%,#5d5053_0%,transparent_50%),radial-gradient(ellipse_at_55%_100%,#504f4f_0%,transparent_30%)] font-['Open_Sans',sans-serif]">
      <TitleBar />
      <Tabs />
      <Ribbon />
      <div className="flex flex-1">
        <SlidePane />
        <main className="flex flex-1 flex-col pt-[157px]">
          <div className="relative mr-[162px] ml-[351px] aspect-video border border-[#8a8686] bg-white">
            <OrgChart />
          </div>
          <div className="mt-[73px]"><Footer /></div>
        </main>
      </div>
    </div>
  );
}
